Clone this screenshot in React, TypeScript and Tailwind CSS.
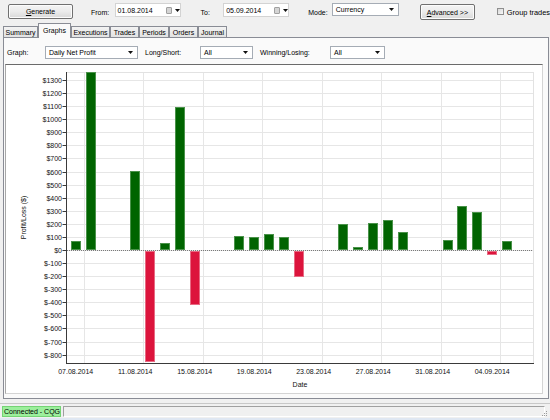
import React from "react";

const Y0 = 250;
const SCALE = 0.13081;
const yv = (v: number) => Y0 - v * SCALE;

function Tri({ className = "" }: { className?: string }) {
  return (
    <svg width="5" height="3" viewBox="0 0 5 3" className={className}>
      <path d="M0 0H5L2.5 3Z" fill="#111" />
    </svg>
  );
}

function Button({ className, u, rest }: { className: string; u: string; rest: string }) {
  return (
    <div
      className={`${className} flex items-center justify-center rounded-[2px] border border-[#707070] bg-linear-to-b from-[#f4f4f4] via-[#ebebeb] to-[#d8d8d8] shadow-[inset_0_0_0_1px_#fcfcfc]`}
    >
      <span>
        <span className="underline">{u}</span>
        {rest}
      </span>
    </div>
  );
}

function DateBox({ className, value }: { className: string; value: string }) {
  return (
    <div className={`${className} mt-[3px] w-[66px] h-[14px] bg-white border border-[#d3d3d3] flex items-center pl-[2px]`}>
      <span className="w-[48px]">{value}</span>
      <span className="w-[6px] h-[7px] bg-[#d4d4d4] border border-[#a0a0a0] rounded-[1px]" />
      <Tri className="ml-[3px]" />
    </div>
  );
}

function Select({ className, text }: { className: string; text: string }) {
  return (
    <div className={`${className} h-[13px] bg-white border border-[#a5acb5] flex items-center justify-between pl-[3px] pr-[4px]`}>
      <span>{text}</span>
      <Tri />
    </div>
  );
}

function Tab({ className, children }: { className: string; children: React.ReactNode }) {
  return (
    <div
      className={`${className} h-[11px] border border-b-0 border-[#898c95] bg-linear-to-b from-[#f3f3f3] to-[#e2e2e2] flex items-center justify-center`}
    >
      {children}
    </div>
  );
}

const bars: [number, number][] = [
  [0, 65],
  [1, 1360],
  [4, 605],
  [5, -860],
  [6, 50],
  [7, 1090],
  [8, -420],
  [11, 107],
  [12, 100],
  [13, 125],
  [14, 97],
  [15, -205],
  [18, 196],
  [19, 23],
  [20, 206],
  [21, 227],
  [22, 138],
  [25, 76],
  [26, 334],
  [27, 288],
  [28, -36],
  [29, 69],
];

const xLabels = [
  "07.08.2014",
  "11.08.2014",
  "15.08.2014",
  "19.08.2014",
  "23.08.2014",
  "27.08.2014",
  "31.08.2014",
  "04.09.2014",
];

function Chart() {
  const L = 67,
    R = 533,
    T = 72,
    B = 363;
  const gridY: number[] = [];
  for (let v = -800; v <= 1300; v += 100) gridY.push(v);
  const gridX = xLabels.map((_, j) => 83.7 + 59.5 * j);
  const font = "'Liberation Sans', Arial, sans-serif";
  return (
    <svg width="536" height="328" viewBox="6 65 536 328" className="block">
      <rect x="6" y="65" width="536" height="328" fill="#ffffff" />
      {gridY.map((v) => {
        const y = Math.round(yv(v)) + 0.5;
        return <line key={"h" + v} x1={L} x2={R} y1={y} y2={y} stroke="#e6e6e6" strokeWidth="1" />;
      })}
      {gridX.map((x, i) => {
        const xx = Math.round(x) + 0.5;
        return <line key={"v" + i} x1={xx} x2={xx} y1={T} y2={B} stroke="#e6e6e6" strokeWidth="1" />;
      })}
      <line x1={L} x2={R} y1={T + 0.5} y2={T + 0.5} stroke="#e2e2e2" />
      <line x1={R + 0.5} x2={R + 0.5} y1={T} y2={B} stroke="#e2e2e2" />
      <line x1={L} x2={R} y1={Y0 + 0.5} y2={Y0 + 0.5} stroke="#7a7a7a" strokeDasharray="1 1" />
      {bars.map(([k, v]) => {
        const x = Math.round(70.7 + 14.875 * k);
        const top = v >= 0 ? Math.round(yv(v)) : Y0 + 1;
        const bot = v >= 0 ? Y0 : Math.round(yv(v));
        const pos = v >= 0;
        return (
          <rect
            key={"b" + k}
            x={x + 0.5}
            y={top + 0.5}
            width={9}
            height={bot - top - 1}
            fill={pos ? "#006400" : "#dc143c"}
            stroke={pos ? "#4a924a" : "#e86a83"}
            strokeWidth="1"
          />
        );
      })}
      <line x1={L - 0.5} x2={L - 0.5} y1={T} y2={B + 0.5} stroke="#3a3a3a" />
      <line x1={L - 1} x2={R + 1} y1={B + 0.5} y2={B + 0.5} stroke="#3a3a3a" />
      {gridY.map((v) => {
        const y = Math.round(yv(v)) + 0.5;
        return (
          <g key={"t" + v}>
            <line x1={62.5} x2={L - 0.5} y1={y} y2={y} stroke="#3a3a3a" />
            <text x={62} y={y + 2.5} textAnchor="end" fontSize="7" fontFamily={font} fill="#111">
              {v < 0 ? `$-${-v}` : `$${v}`}
            </text>
          </g>
        );
      })}
      {xLabels.map((lab, i) => (
        <text key={lab} x={gridX[i] - 8} y={373.5} textAnchor="middle" fontSize="7" fontFamily={font} fill="#111">
          {lab}
        </text>
      ))}
      <text x={300} y={386.5} textAnchor="middle" fontSize="7" fontFamily={font} fill="#111">
        Date
      </text>
      <text
        x={0}
        y={0}
        textAnchor="middle"
        fontSize="7"
        fontFamily={font}
        fill="#111"
        transform="translate(25.5 217.5) rotate(-90)"
      >
        Profit/Loss ($)
      </text>
    </svg>
  );
}

export default function App() {
  return (
    <div className="w-[550px] h-[420px] bg-[#f0f0f0] flex flex-col overflow-hidden font-['Liberation_Sans',Arial,sans-serif] text-[7px] leading-none text-black">
      {/* toolbar */}
      <div className="h-[23px] flex items-start shrink-0 whitespace-nowrap">
        <Button className="ml-[8px] mt-[4px] w-[66px] h-[15px]" u="G" rest="enerate" />
        <span className="ml-[18px] mt-[9px] w-[24px]">From:</span>
        <DateBox className="" value="01.08.2014" />
        <span className="ml-[20px] mt-[9px] w-[23px]">To:</span>
        <DateBox className="" value="05.09.2014" />
        <span className="ml-[19px] mt-[9px] w-[24px]">Mode:</span>
        <Select className="mt-[3px] w-[68px]" text="Currency" />
        <Button className="ml-[21px] mt-[4px] w-[56px] h-[16px]" u="A" rest="dvanced >>" />
        <span className="ml-[22px] mt-[8px] w-[7px] h-[7px] border border-[#8f8f8f] bg-linear-to-br from-[#d8d8d8] to-[#f8f8f8]" />
        <span className="ml-[3px] mt-[9px] text-[7.4px]">Group trades</span>
      </div>

      {/* tabs */}
      <div className="h-[14px] flex items-end pl-[3px] shrink-0 relative z-10 whitespace-nowrap">
        <Tab className="w-[35px]">Summary</Tab>
        <div className="w-[33px] h-[15px] -mb-[1px] bg-[#fafafa] border border-b-0 border-[#898c95] flex items-center justify-center pb-[2px]">
          Graphs
        </div>
        <Tab className="w-[39px]">Executions</Tab>
        <Tab className="w-[29px]">Trades</Tab>
        <Tab className="w-[30px]">Periods</Tab>
        <Tab className="w-[29px]">Orders</Tab>
        <Tab className="w-[29px]">Journal</Tab>
      </div>

      {/* panel */}
      <div className="ml-[3px] w-[546px] h-[362px] border border-[#898c95] bg-[#fafafa] flex flex-col shrink-0">
        <div className="h-[26px] flex items-start whitespace-nowrap shrink-0">
          <span className="ml-[3px] mt-[11px] w-[38px]">Graph:</span>
          <Select className="mt-[8px] w-[93px]" text="Daily Net Profit" />
          <span className="ml-[7px] mt-[11px] w-[55px]">Long/Short:</span>
          <Select className="mt-[8px] w-[53px]" text="All" />
          <span className="ml-[7px] mt-[11px] w-[70px]">Winning/Losing:</span>
          <Select className="mt-[8px] w-[55px]" text="All" />
        </div>
        <div className="ml-[1px] w-[538px] h-[330px] border border-t-[#6b6b6b] border-l-[#a8a8a8] border-r-[#d4d4d4] border-b-[#d4d4d4] shrink-0">
          <Chart />
        </div>
      </div>

      <div className="h-[4px] shrink-0" />

      {/* status bar */}
      <div className="h-[15px] shrink-0 border-t border-[#c8c8c8] flex items-center pl-[2px] gap-[2px] relative">
        <div className="w-[59px] h-[11px] bg-[#9cef9c] border border-[#74d474] flex items-center pl-[1px] whitespace-nowrap">
          Connected - CQG
        </div>
        <div className="w-[482px] h-[11px] border border-t-[#a0a0a0] border-l-[#a0a0a0] border-r-white border-b-white" />
        <svg width="6" height="6" viewBox="0 0 6 6" className="absolute right-[2px] bottom-[1px]">
          <rect x="4" y="0" width="1" height="1" fill="#9a9a9a" />
          <rect x="2" y="2" width="1" height="1" fill="#9a9a9a" />
          <rect x="4" y="2" width="1" height="1" fill="#9a9a9a" />
          <rect x="0" y="4" width="1" height="1" fill="#9a9a9a" />
          <rect x="2" y="4" width="1" height="1" fill="#9a9a9a" />
          <rect x="4" y="4" width="1" height="1" fill="#9a9a9a" />
        </svg>
      </div>
      <div className="h-[2px] shrink-0 bg-[#dfe7f2]" />
    </div>
  );
}
